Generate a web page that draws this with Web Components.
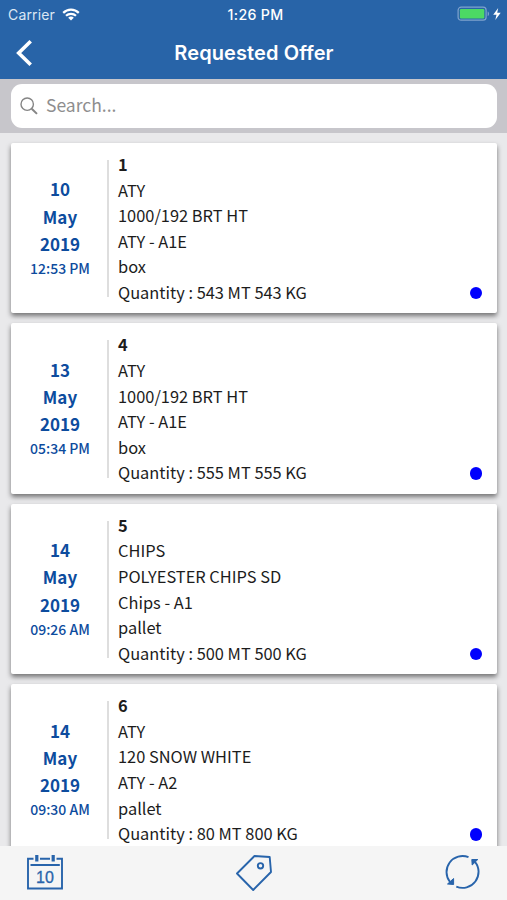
<!DOCTYPE html>
<html lang="en">
<head>
<meta charset="utf-8">
<title>Requested Offer</title>
<style>
  body {
    margin: 0;
    background: #e9e9eb;
    font-family: "Noto Sans CJK SC", "Open Sans", sans-serif;
  }
</style>
</head>
<body>
<offer-app>
  <status-bar slot="top" carrier="Carrier" time="1:26 PM"></status-bar>
  <nav-header slot="top">Requested Offer</nav-header>
  <search-bar slot="top" placeholder="Search..."></search-bar>

  <offer-card day="10" month="May" year="2019" time="12:53 PM">
    <b>1</b><span>ATY</span><span>1000/192 BRT HT</span><span>ATY - A1E</span><span>box</span><span>Quantity : 543 MT 543 KG</span>
  </offer-card>
  <offer-card day="13" month="May" year="2019" time="05:34 PM">
    <b>4</b><span>ATY</span><span>1000/192 BRT HT</span><span>ATY - A1E</span><span>box</span><span>Quantity : 555 MT 555 KG</span>
  </offer-card>
  <offer-card day="14" month="May" year="2019" time="09:26 AM">
    <b>5</b><span>CHIPS</span><span>POLYESTER CHIPS SD</span><span>Chips - A1</span><span>pallet</span><span>Quantity : 500 MT 500 KG</span>
  </offer-card>
  <offer-card day="14" month="May" year="2019" time="09:30 AM">
    <b>6</b><span>ATY</span><span>120 SNOW WHITE</span><span>ATY - A2</span><span>pallet</span><span>Quantity : 80 MT 800 KG</span>
  </offer-card>

  <tab-bar slot="bottom"></tab-bar>
</offer-app>

<script>
class OfferApp extends HTMLElement {
  constructor () {
    super()
    this.attachShadow({ mode: 'open' })
  }

  connectedCallback () {
    this.shadowRoot.innerHTML =
      /*html*/`
      <style>
        :host {
          display: flex;
          flex-direction: column;
          height: 900px;
          overflow: hidden;
        }
        header, footer { flex: none; }
        main {
          flex: 1;
          min-height: 0;
          overflow: hidden;
          display: flex;
          flex-direction: column;
          gap: 10px;
          padding: 10px 10px 0 11px;
        }
      </style>
      <header><slot name="top"></slot></header>
      <main><slot></slot></main>
      <footer><slot name="bottom"></slot></footer>
      `
  }
}

class StatusBar extends HTMLElement {
  constructor () {
    super()
    this.attachShadow({ mode: 'open' })
  }

  connectedCallback () {
    this.shadowRoot.innerHTML =
      /*html*/`
      <style>
        :host {
          display: grid;
          grid-template-columns: 1fr auto 1fr;
          align-items: center;
          height: 27px;
          padding: 0 5px 0 8px;
          background: #2864a8;
          color: #fff;
          font: 14px/27px Inter, sans-serif;
        }
        div { display: flex; align-items: center; }
        .carrier { color: #dbe7f4; letter-spacing: 0.15px; }
        .carrier svg { margin-left: 7px; }
        .time { font-size: 14.2px; font-weight: 500; letter-spacing: 0.300px; padding: 1px 0 0 1px; }
        .power { justify-content: flex-end; }
      </style>
      <div class="carrier">${this.getAttribute('carrier')}
        <svg width="18" height="13" viewBox="0 0 18 13" fill="none" stroke="#fff" stroke-width="2.2">
          <path d="M1.2 4.9C5.6.6 12.4.6 16.8 4.9"/>
          <path d="M4 7.8c2.8-2.7 7.2-2.7 10 0"/>
          <path d="M9 12.4 6.2 9.7c1.6-1.5 4-1.5 5.6 0z" fill="#fff" stroke="none"/>
        </svg>
      </div>
      <div class="time">${this.getAttribute('time')}</div>
      <div class="power">
        <svg width="45" height="16" viewBox="0 0 45 16">
          <rect x="1.1" y="1.2" width="28" height="13" rx="3" fill="none" stroke="#7fa3cd" stroke-width="1.2"/>
          <rect x="2.9" y="3" width="24.4" height="9.4" rx="1.2" fill="#4cd964"/>
          <path d="M30.7 5.5c1.8.6 1.8 4 0 4.6z" fill="#7fa3cd"/>
          <path d="M41.2 2 36.2 8.7h3.3L38.3 14l5.4-7.2h-3.5z" fill="#fff"/>
        </svg>
      </div>
      `
  }
}

class NavHeader extends HTMLElement {
  constructor () {
    super()
    this.attachShadow({ mode: 'open' })
  }

  connectedCallback () {
    this.shadowRoot.innerHTML =
      /*html*/`
      <style>
        :host {
          display: grid;
          grid-template-columns: 40px 1fr 40px;
          align-items: center;
          box-sizing: border-box;
          height: 52px;
          background: #2864a8;
          color: #fff;
          font: 600 20px/50px Inter, sans-serif;
        }
        svg { display: block; margin-left: 14px; margin-top: -1px; }
        .title { text-align: center; padding-left: 1px; letter-spacing: 0.1px; }
      </style>
      <svg width="22" height="30" viewBox="0 0 22 30" fill="none" stroke="#fff" stroke-width="3.6">
        <path d="M16.7 3.3 4.7 15l12 11.7"/>
      </svg>
      <div class="title"><slot></slot></div>
      `
  }
}

class SearchBar extends HTMLElement {
  constructor () {
    super()
    this.attachShadow({ mode: 'open' })
  }

  connectedCallback () {
    this.shadowRoot.innerHTML =
      /*html*/`
      <style>
        :host {
          display: block;
          box-sizing: border-box;
          height: 54px;
          padding: 5px 10px 0 11px;
          background: #c7c6cb;
        }
        .field {
          display: flex;
          align-items: center;
          height: 44px;
          border-radius: 11px;
          background: #fff;
          color: #8e8e8e;
          font-size: 17.5px;
          line-height: 42px;
        }
        svg { margin: 0 8px 0 9px; }
        span { padding-bottom: 2px; }
      </style>
      <div class="field">
        <svg width="18" height="18" viewBox="0 0 18 18" fill="none" stroke="#858585" stroke-width="1.4">
          <circle cx="7.2" cy="7.2" r="6.2"/>
          <path d="m11.7 11.7 5.3 5.2" stroke-width="2"/>
        </svg>
        <span>${this.getAttribute('placeholder')}</span>
      </div>
      `
  }
}

class OfferCard extends HTMLElement {
  constructor () {
    super()
    this.attachShadow({ mode: 'open' })
  }

  connectedCallback () {
    this.shadowRoot.innerHTML =
      /*html*/`
      <style>
        :host {
          display: flex;
          flex: none;
          box-sizing: border-box;
          height: 170.4px;
          padding: 9px 15px 8px 0;
          border-radius: 2px;
          background: #fff;
          box-shadow: 0 3px 5px rgba(0, 0, 0, .5);
          color: #1c1c1c;
        }
        .date {
          display: flex;
          flex-direction: column;
          justify-content: center;
          box-sizing: border-box;
          width: 96px;
          padding: 0 0 3px 2px;
          text-align: center;
          color: #0d4c9e;
          font-size: 17px;
          font-weight: 700;
          line-height: 27.2px;
        }
        .date small { font-size: 14px; line-height: 22px; font-weight: 500; }
        .line { width: 2px; margin: 8px 9px 8px 0; background: #dedede; }
        .info {
          flex: 1;
          display: flex;
          flex-direction: column;
          font-size: 16.4px;
          line-height: 25.6px;
        }
        .dot {
          align-self: flex-end;
          width: 12.4px;
          height: 12.4px;
          margin-bottom: 6px;
          border-radius: 50%;
          background: #0000fe;
        }
      </style>
      <div class="date">
        <span>${this.getAttribute('day')}</span>
        <span>${this.getAttribute('month')}</span>
        <span>${this.getAttribute('year')}</span>
        <small>${this.getAttribute('time')}</small>
      </div>
      <div class="line"></div>
      <div class="info"><slot></slot></div>
      <div class="dot"></div>
      `
  }
}

class TabBar extends HTMLElement {
  constructor () {
    super()
    this.attachShadow({ mode: 'open' })
  }

  connectedCallback () {
    this.shadowRoot.innerHTML =
      /*html*/`
      <style>
        :host {
          display: flex;
          justify-content: space-between;
          align-items: center;
          box-sizing: border-box;
          height: 54px;
          padding: 0 24px 0 25px;
          background: #f5f5f5;
        }
        svg { fill: none; stroke: #2864ab; stroke-width: 1.9; }
        text { fill: #2864ab; stroke: #2864ab; stroke-width: .3; font: 16px "Liberation Sans", sans-serif; }
      </style>
      <svg width="40" height="40" viewBox="0 0 40 40">
        <path d="M8.5 5.7H3V35.5H37V5.7H31.5M15 5.7H25M5.5 12H34.8"/>
        <path d="M11.8 2v6.6M28.2 2v6.6" stroke-width="3.2"/>
        <text x="20" y="30.4" text-anchor="middle">10</text>
      </svg>
      <svg width="40" height="40" viewBox="0 0 40 40">
        <path d="M20.5 3 35.7 4 37 19 19.2 37 3 20.5z" stroke-linejoin="round"/>
        <circle cx="26.5" cy="12.8" r="2.7"/>
      </svg>
      <svg width="40" height="40" viewBox="0 0 40 40">
        <path d="M25.500 4.200A16 16 0 0 0 7 29M13.300 33.600A16 16 0 0 0 32 8.800"/>
        <path d="M28.800 6.500h6l-5.600 5.500zM10.600 31.500v-6L4.500 31z" fill="#2864ab" stroke-width="1"/>
      </svg>
      `
  }
}

customElements.define('offer-app', OfferApp)
customElements.define('status-bar', StatusBar)
customElements.define('nav-header', NavHeader)
customElements.define('search-bar', SearchBar)
customElements.define('offer-card', OfferCard)
customElements.define('tab-bar', TabBar)
</script>
</body>
</html>
